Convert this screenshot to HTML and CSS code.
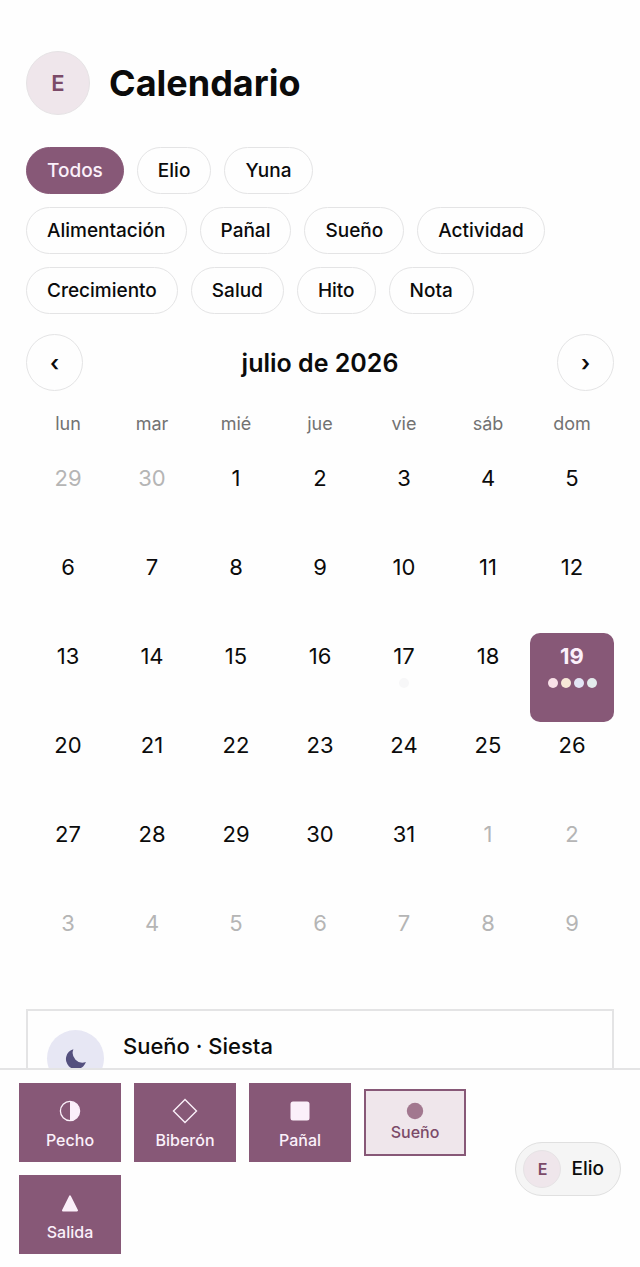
FILE: index.html
```html
<!doctype html>
<html lang="es">
<head>
    <meta charset="UTF-8">
    <meta name="viewport" content="width=device-width, initial-scale=1.0">
    <title>Calendario</title>
    <link rel="stylesheet" href="styles.css">
</head>
<body>
    <main>
        <header>
            <span class="avatar">E</span>
            <h1>Calendario</h1>
        </header>
        <div class="filters">
            <div class="chips">
                <button class="chip active">Todos</button>
                <button class="chip">Elio</button>
                <button class="chip">Yuna</button>
            </div>
            <div class="chips">
                <button class="chip">Alimentación</button>
                <button class="chip">Pañal</button>
                <button class="chip">Sueño</button>
                <button class="chip">Actividad</button>
                <button class="chip">Crecimiento</button>
                <button class="chip">Salud</button>
                <button class="chip">Hito</button>
                <button class="chip">Nota</button>
            </div>
        </div>
        <div class="month">
            <button class="arrow" aria-label="Mes anterior">‹</button>
            <h2>julio de 2026</h2>
            <button class="arrow" aria-label="Mes siguiente">›</button>
        </div>
        <table>
            <thead>
                <tr>
                    <th>lun</th>
                    <th>mar</th>
                    <th>mié</th>
                    <th>jue</th>
                    <th>vie</th>
                    <th>sáb</th>
                    <th>dom</th>
                </tr>
            </thead>
            <tbody>
            </tbody>
        </table>
        <article class="event">
            <span class="event-icon">
                <svg width="24" height="24" viewBox="0 0 24 24"><path d="M9.4 2.2A10.2 10.2 0 1 0 21.9 15 9.8 9.8 0 0 1 9.4 2.2z" fill="#54507e"/></svg>
            </span>
            <h3>Sueño · Siesta</h3>
        </article>
    </main>
    <footer>
        <div class="actions">
            <button class="action">
                <svg width="22" height="22" viewBox="0 0 22 22"><circle cx="11" cy="11" r="9.6" fill="none" stroke="currentColor" stroke-width="1.3"/><path d="M11 1.4a9.6 9.6 0 0 1 0 19.2z" fill="currentColor"/></svg>
                Pecho
            </button>
            <button class="action">
                <svg width="22" height="22" viewBox="0 0 22 22"><path d="M11-.5 22.5 11 11 22.5-.5 11z" fill="none" stroke="currentColor" stroke-width="1.4"/></svg>
                Biberón
            </button>
            <button class="action">
                <svg width="22" height="22" viewBox="0 0 22 22"><rect x="1.5" y="1.5" width="19" height="19" rx="2.5" fill="currentColor"/></svg>
                Pañal
            </button>
            <button class="action running">
                <svg width="22" height="22" viewBox="0 0 22 22"><circle cx="11" cy="11" r="8.2" fill="#a2788f"/></svg>
                Sueño
            </button>
            <button class="action">
                <svg width="22" height="22" viewBox="0 0 22 22"><path d="M11 4.4 18 18.4H4z" fill="currentColor" stroke="currentColor" stroke-width="2" stroke-linejoin="round"/></svg>
                Salida
            </button>
        </div>
        <button class="child"><span class="avatar small">E</span>Elio</button>
    </footer>

<script>
    let $=el=>document.querySelector(el);

    // puntos de color de cada día con registros
    let events={
        "2026-6-17":["#f7f7f8"],
        "2026-6-19":["#f9e1e8","#f8e8d8","#e3e5f5","#e3ebec"],
    };
    let selected="2026-6-19";

    function showMonth(year,month) {
        $("tbody").innerHTML="";
        let offset=(new Date(year,month,1).getDay()+6)%7;
        for(let row=0;row<6;row++){
            let tr=document.createElement("tr");
            for(let col=0;col<7;col++){
                let date=new Date(year,month,row*7+col+1-offset);
                let key=`${date.getFullYear()}-${date.getMonth()}-${date.getDate()}`;
                let dots=(events[key]||[]).map(color=>`<i style="background:${color}"></i>`).join("");
                let state=date.getMonth()!==month?"outside":key===selected?"selected":"";
                tr.innerHTML+=`<td><button class="day ${state}">${date.getDate()}<span class="dots">${dots}</span></button></td>`;
            }
            $("tbody").append(tr);
        }
    }
    showMonth(2026,6);
</script>
</body>
</html>
```
FILE: styles.css
```css
* {
    padding: 0;
    margin: 0;
    box-sizing: border-box;
}
body {
    height: 100vh;
    display: flex;
    flex-direction: column;
    font-family: Inter, "Liberation Sans", sans-serif;
    color: #0b0b0b;
    background: #fefefe;
}
button {
    font: inherit;
    color: inherit;
    background: none;
    border: none;
    cursor: pointer;
}
svg {
    display: block;
    overflow: visible;
}
main {
    flex: 1;
    min-height: 0;
    padding: 51px 26px 0;
    overflow-y: auto;
    scrollbar-width: none;
}
header {
    display: flex;
    align-items: center;
    gap: 19px;
    margin-bottom: 32px;
}
.avatar {
    width: 64px;
    height: 64px;
    display: flex;
    align-items: center;
    justify-content: center;
    border: 1px solid #e6e3e5;
    border-radius: 50%;
    background: #efe6eb;
    color: #7b4a68;
    font-size: 22px;
    font-weight: 600;
}
.avatar.small {
    width: 38px;
    height: 38px;
    font-size: 16px;
}
h1 {
    font-size: 36px;
    font-weight: 700;
}
.filters {
    display: flex;
    flex-direction: column;
    gap: 13px;
    margin-bottom: 20px;
}
.chips {
    display: flex;
    flex-wrap: wrap;
    gap: 13px;
}
.chip {
    height: 47px;
    padding: 0 20px;
    border: 1px solid #e4e4e5;
    border-radius: 24px;
    font-size: 19px;
    font-weight: 500;
}
.chip.active {
    background: #875877;
    border-color: #875877;
    color: #fbf0fa;
}
.month {
    display: flex;
    align-items: center;
    justify-content: space-between;
    margin-bottom: 16px;
}
.arrow {
    width: 57px;
    height: 57px;
    border: 1px solid #e4e4e5;
    border-radius: 50%;
    font-size: 22px;
    font-weight: 600;
}
h2 {
    font-size: 25px;
    font-weight: 600;
}
table {
    width: 100%;
    table-layout: fixed;
    border-collapse: collapse;
}
th {
    height: 32px;
    font-size: 18px;
    font-weight: 400;
    color: #727272;
}
thead::after {
    content: "";
    display: block;
    height: 16px;
}
.day {
    display: flex;
    flex-direction: column;
    align-items: center;
    width: 100%;
    height: 89px;
    padding-top: 9px;
    border-radius: 10px;
    font-size: 22px;
    line-height: 28px;
}
.day.outside {
    color: #b5b5b5;
}
.day.selected {
    background: #875877;
    color: #fbf0fa;
    font-weight: 700;
}
.dots {
    display: flex;
    gap: 3px;
    margin-top: 8px;
}
.dots i {
    width: 10px;
    height: 10px;
    border-radius: 50%;
}
.event {
    display: flex;
    align-items: flex-start;
    gap: 19px;
    margin-top: 20px;
    padding: 19px;
    border: 2px solid #e4e4e5;
}
.event-icon {
    width: 57px;
    height: 57px;
    display: flex;
    align-items: center;
    justify-content: center;
    border-radius: 50%;
    background: #e7e7f4;
}
h3 {
    font-size: 22px;
    font-weight: 500;
    line-height: 32px;
}
footer {
    display: flex;
    align-items: center;
    justify-content: space-between;
    gap: 13px;
    padding: 13px 19px;
    border-top: 2px solid #e4e4e5;
    background: #fefefe;
}
.actions {
    flex: 1;
    display: flex;
    flex-wrap: wrap;
    align-items: center;
    gap: 13px;
}
.action {
    width: 102px;
    height: 79px;
    display: flex;
    flex-direction: column;
    align-items: center;
    justify-content: flex-end;
    gap: 8px;
    padding-bottom: 12px;
    background: #875877;
    color: #fbf0fa;
    font-size: 16px;
    font-weight: 500;
    line-height: 20px;
}
.action.running {
    height: 67px;
    gap: 0;
    border: 2px solid #875877;
    background: #efe6eb;
    color: #7b4a68;
}
.child {
    display: flex;
    align-items: center;
    gap: 10px;
    height: 54px;
    padding: 0 16px 0 7px;
    border: 1px solid #e0e0e0;
    border-radius: 27px;
    background: #f5f5f5;
    font-size: 19px;
    font-weight: 500;
}
```
